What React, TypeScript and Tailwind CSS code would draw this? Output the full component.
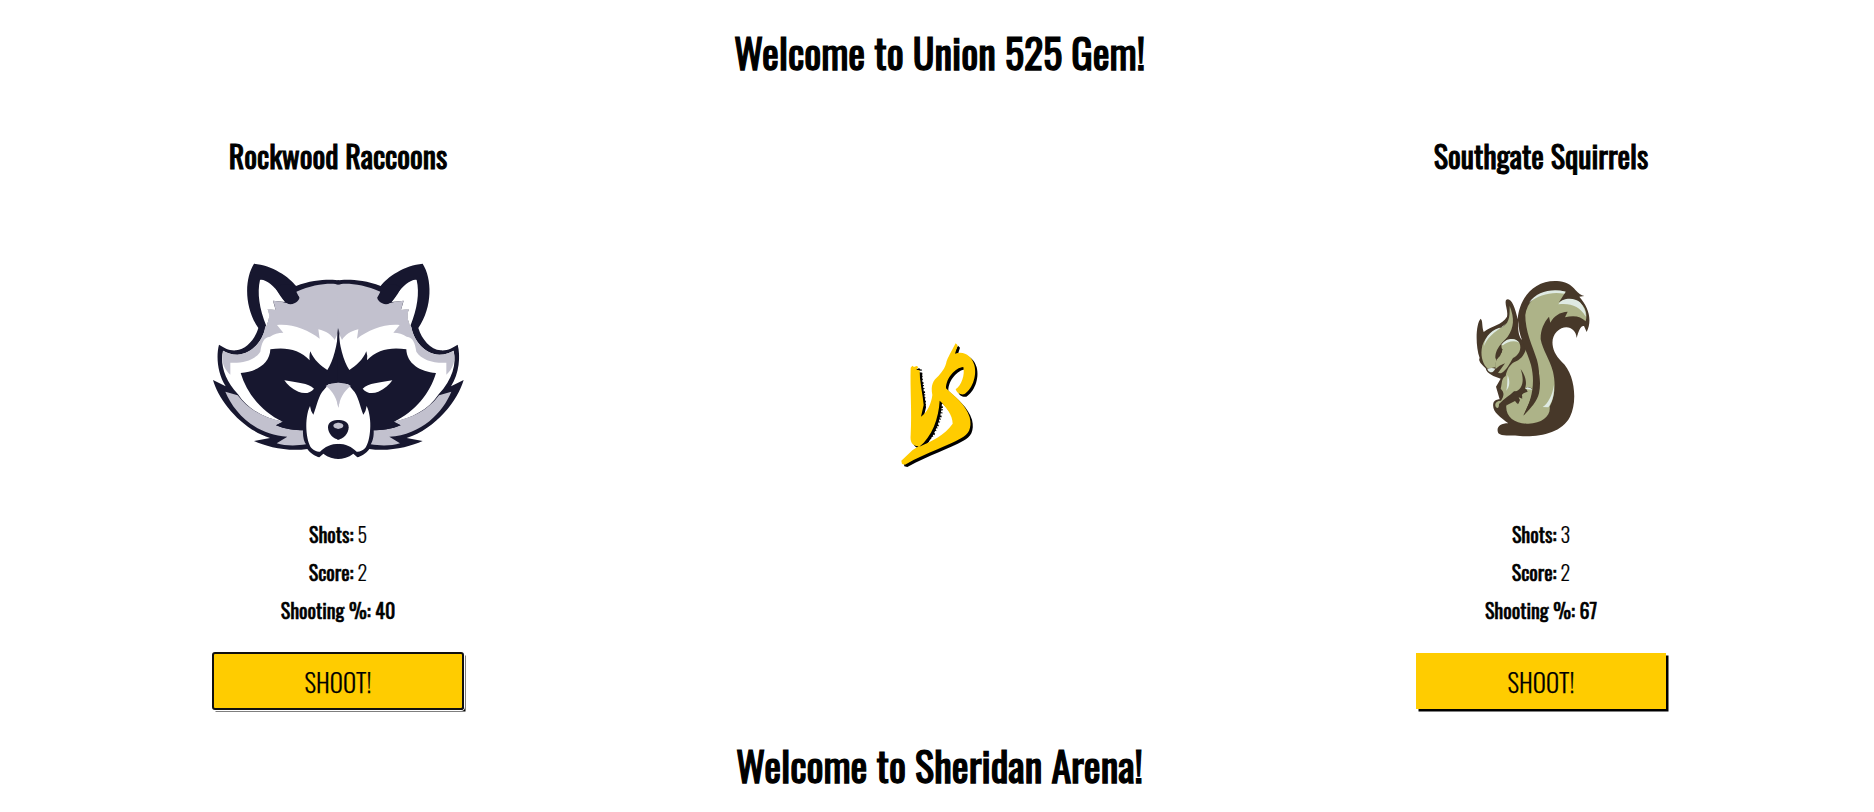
import type { ReactNode } from 'react';

const NAVY = '#17172f';
const GREY = '#c2c1ce';
const BARK = '#473829';
const MOSS = '#adb388';
const ICE = '#dfeae3';

/* Left half of every layer, back to front; each one is mirrored about x = 415. */
const RACCOON_LAYERS = [
  {
    fill: NAVY,
    d: 'M418 91C400 88 345 85 288 108C270 82 215 45 162 41C134 85 131 170 175 234C165 268 138 299 108 301C88 303 72 293 57 284C48 318 52 370 77 409L39 390C56 450 122 536 210 564L162 573C200 590 262 606 322 597C330 609 348 620 358 622L370 611C385 622 400 627 418 627Z',
  },
  {
    fill: '#fff',
    d: 'M418 106L298 142L197 228C190 268 160 312 112 314C94 314 80 308 69 302C60 340 72 388 114 433C145 480 195 505 250 516L418 540Z',
  },
  {
    fill: GREY,
    d: 'M418 105C412 104 410 102 400 101C370 100 330 106 289 125L298 143L275 163L244 155L219 152L223 164L227 180L203 177C210 195 207 212 199 227L195 233C190 268 158 312 112 314C94 314 80 308 70 302C62 330 70 355 91 374L91 338C130 340 165 330 181 305C185 280 190 262 210 260C222 252 234 248 250 248L231 225C275 220 325 240 359 266L355 238C378 243 395 255 404 270L418 240Z',
  },
  {
    fill: '#fff',
    d: 'M180 90C195 86 222 108 240 133L255 156L219 152L227 180L203 178C211 195 207 212 199 228C178 175 171 130 180 90Z',
  },
  {
    fill: NAVY,
    d: 'M288 108C270 100 232 100 228 116C240 138 256 162 272 163C288 162 300 148 298 142L289 132L286 125L290 123Z',
  },
  {
    fill: GREY,
    d: 'M76 425L113 436C145 480 195 505 250 515L228 526C255 538 285 541 309 541C308 560 312 575 318 583C290 588 255 588 230 580L262 560C165 555 100 485 76 425Z',
  },
  {
    fill: NAVY,
    d: 'M416 234C412 285 400 333 382 360C362 348 342 330 331 304Q327 316 329 331C300 298 255 290 211 298C210 340 170 366 122 369C140 430 185 485 248 515L228 526C255 538 285 541 320 541L418 541L418 250Z',
  },
  { fill: '#fff', d: 'M253 391C290 398 325 399 342 416C330 431 312 432 295 425C275 416 262 404 253 391Z' },
  {
    fill: '#fff',
    d: 'M418 402L386 403L372 419C355 435 350 470 340 494Q332 484 330 468C312 505 318 575 335 595C343 603 352 606 360 605C375 590 392 581 418 581Z',
  },
  { fill: GREY, d: 'M418 398C402 398 387 401 377 408C400 424 411 448 415 473L418 460Z' },
  { fill: NAVY, d: 'M418 510C400 510 384 514 384 532C384 550 400 569 418 569Z' },
  { fill: GREY, d: 'M418 518C407 518 400 521 400 527C400 533 407 536 418 536Z' },
];

function Raccoon() {
  return (
    <svg viewBox="0 0 828 660" className="h-[220px] w-[276px]" aria-hidden="true">
      {RACCOON_LAYERS.map(({ fill, d }) => (
        <g key={d} fill={fill}>
          <path d={d} />
          <path d={d} transform="translate(830 0) scale(-1 1)" />
        </g>
      ))}
    </svg>
  );
}

function Squirrel() {
  return (
    <svg viewBox="-147 -60 750 660" className="h-[220px] w-[250px]" aria-hidden="true">
      <path
        fill={BARK}
        d="M100 490C92 472 105 460 130 460C105 440 80 425 85 400C88 390 98 388 104 388L93 350L107 326L85 318C70 311 63 303 62 295C48 282 39 272 44 264C30 225 33 160 47 146C54 152 50 168 56 186C78 168 112 165 126 140C130 120 118 104 123 90C136 79 150 108 158 148C163 85 205 33 270 33C295 31 318 42 332 61C340 70 348 76 358 78L343 80C370 110 383 150 365 186L357 168C348 166 342 178 335 204C333 172 300 160 275 185C255 205 258 245 290 275C330 310 338 395 315 440C290 490 220 502 165 498C132 493 112 501 100 490Z"
      />
      <path fill="#fff" d="M161 152C160 175 164 192 171 210C162 200 157 180 161 152Z" />
      <path fill={MOSS} d="M134 108C149 145 147 172 128 200C116 213 104 224 96 240C90 255 90 263 94 270L90 292L68 296C55 285 47 262 50 238C52 208 82 180 112 172C138 155 133 130 134 108Z" />
      <path fill={ICE} d="M124 160C100 182 72 192 57 228C60 196 84 177 112 172Z" />
      <path fill={MOSS} d="M109 225C122 203 152 201 163 218C172 238 160 256 144 264C134 280 126 300 108 310L99 309L120 280C108 284 98 291 92 297C86 276 100 262 111 246Z" />
      <path fill={ICE} d="M109 225C122 203 152 201 163 218C145 209 125 217 114 226Z" />
      <path fill={BARK} d="M92 262L107 234L113 238L105 258L95 268Z" />
      <path fill={ICE} d="M67 297Q79 292 91 296Q85 308 76 307Q69 305 67 297Z" />
      <path
        fill={MOSS}
        d="M183 238C206 280 216 345 196 390C188 410 180 424 176 436C198 414 216 395 222 370C232 320 215 280 200 245C176 195 170 150 189 108C205 75 255 55 302 65L282 97C300 86 325 84 345 98C362 112 368 130 362 154C348 138 325 135 300 142L308 125C285 126 266 138 256 158L252 140C236 158 226 182 227 208C233 240 254 268 264 305C272 340 271 378 254 410C258 436 232 460 190 461C150 463 120 440 124 405C130 392 145 385 150 378L160 402L165 390L158 378L172 382L170 372L188 365L183 355L203 358C190 348 185 350 182 358L178 350C176 362 160 366 147 364C135 376 118 386 102 402C102 413 98 418 92 410C88 400 94 392 108 392C116 380 120 368 107 356C112 340 108 325 122 318C125 300 134 285 147 277C166 270 176 258 183 238Z"
      />
      <path fill={BARK} d="M182 112C175 175 200 220 216 270C232 330 218 395 174 438C200 395 212 340 198 285C188 250 166 215 168 165Z" />
      <path fill={BARK} d="M167 297C182 318 188 340 178 360C168 372 160 370 150 366C175 355 178 330 167 297Z" />
      <path fill={BARK} d="M148 365L178 366L170 376L172 386L161 382L158 403L150 393L122 407C128 390 138 375 148 365Z" />
      <path fill={ICE} d="M181 357C186 349 193 351 202 359Z" />
      <path fill={ICE} d="M128 315C136 335 134 350 124 362C128 345 126 330 128 315Z" />
      <path fill={ICE} d="M192 98C215 65 260 54 302 65L298 71C260 64 222 74 192 98Z" />
      <path fill={ICE} d="M280 103C292 82 328 82 345 97C357 110 364 128 362 140C345 108 315 98 280 103Z" />
      <path fill={ICE} d="M267 345C268 375 262 395 250 412L233 411C250 400 262 375 267 345Z" />
    </svg>
  );
}

const VS_SHAPE =
  'M62 98L67 92L72 96L80 93L85 96L79 104L89 106L90 130L94 160L98 185L101 210L93 245C113 232 124 205 127 180C122 150 128 138 146 122C160 105 166 98 170 78C178 60 190 38 197 25L203 31L195 56C222 46 245 62 253 90C262 125 245 165 222 178C210 180 200 173 197 163C215 150 225 120 220 96C195 98 168 130 168 160C195 185 228 210 239 247C247 280 235 300 213 310C170 335 115 350 45 389L36 387L34 377L68 345L86 334C65 332 60 320 62 300C66 230 60 160 62 98ZM149 197C146 250 126 305 88 335C122 320 165 300 188 266C188 240 168 215 149 197Z';

function Versus() {
  return (
    <svg viewBox="0 0 300 420" className="h-[140px] w-[100px]" aria-hidden="true">
      <path fill="#000" fillRule="evenodd" d={VS_SHAPE} transform="translate(7 7)" />
      <path
        fill="none"
        stroke="#000"
        strokeWidth="8"
        strokeDasharray="3 7 5 4 3 6"
        d="M92 104L95 135L101 170L104 205L97 246M154 204L155 228L146 262L130 298L108 324"
      />
      <path fill="#fc0" fillRule="evenodd" d={VS_SHAPE} />
    </svg>
  );
}

function Stat({ label, children }: { label: string; children: ReactNode }) {
  return (
    <p>
      <span className="font-normal [-webkit-text-stroke:0.6px_#000]">{label}</span>{' '}
      <span className="[-webkit-text-stroke:0.2px_#000]">{children}</span>
    </p>
  );
}

type TeamProps = { name: string; logo: ReactNode; shots: number; score: number; focused?: boolean };

function Team({ name, logo, shots, score, focused }: TeamProps) {
  return (
    <section className="flex w-[600px] flex-col items-center">
      <h2 className="text-[30px] leading-[44px] font-normal [-webkit-text-stroke:1px_#000]">{name}</h2>
      <div className="mt-[72px] flex h-[220px] justify-center">{logo}</div>
      <div className="mt-[49px] flex flex-col gap-2 text-center text-[20px] leading-[30px] font-light">
        <Stat label="Shots:">{shots}</Stat>
        <Stat label="Score:">{score}</Stat>
        <p className="font-normal [-webkit-text-stroke:0.6px_#000]">Shooting %: {Math.round((score / shots) * 100)}</p>
      </div>
      <button className="relative mt-7 h-14 w-[250px] bg-[#fc0] text-[25px] leading-[58px] font-light shadow-[2.5px_2.5px_0_#000] [-webkit-text-stroke:0.25px_#000]">
        SHOOT!
        {focused && <span className="absolute -inset-px rounded-[3px] border-2 border-[#101010] shadow-[0_0_0_1px_#fff]" />}
      </button>
    </section>
  );
}

export default function App() {
  return (
    <div className="h-[812px] overflow-hidden bg-white pt-[22px] pr-[33px] pl-[38px] font-['Oswald',sans-serif] text-black">
      <h1 className="text-center text-[40px] leading-[60px] font-normal [-webkit-text-stroke:1.25px_#000]">Welcome to Union 525 Gem!</h1>
      <main className="mt-[52px] flex justify-between">
        <Team name="Rockwood Raccoons" logo={<Raccoon />} shots={5} score={2} focused />
        <div className="flex w-[600px] justify-center pt-[201px]">
          <Versus />
        </div>
        <Team name="Southgate Squirrels" logo={<Squirrel />} shots={3} score={2} />
      </main>
      <h1 className="mt-[26px] text-center text-[40px] leading-[60px] font-normal [-webkit-text-stroke:1.25px_#000]">Welcome to Sheridan Arena!</h1>
    </div>
  );
}
